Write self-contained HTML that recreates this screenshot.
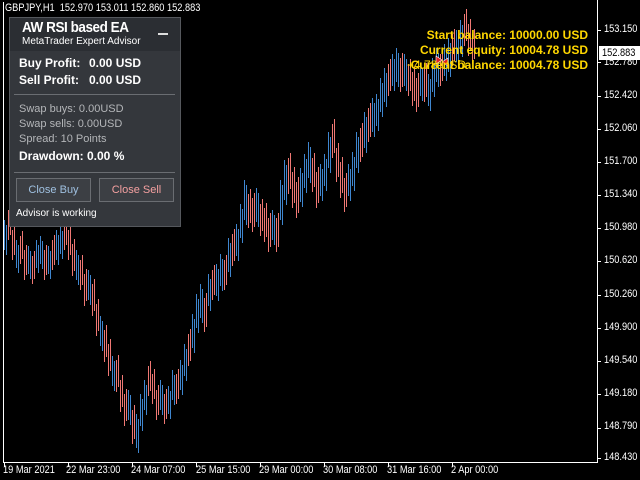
<!DOCTYPE html>
<html><head><meta charset="utf-8"><style>
body{margin:0;width:640px;height:480px;background:#000;overflow:hidden;position:relative;font-family:"Liberation Sans",sans-serif}
.ax{position:absolute;color:#fff;font-size:11px;line-height:11px;transform:scaleX(.84);transform-origin:left;white-space:nowrap}
.panel{position:absolute;left:9px;top:17px;width:170px;height:208px;background:#34373c;border:1px solid #55585d}
.hdr{height:33px;background:#2b2e33}
.t{position:absolute;color:#fff;white-space:nowrap}
.btn{position:absolute;top:160px;width:73px;height:22px;border:1px solid #6a6d72;background:#3c3f44;font-size:11px;line-height:22px;text-align:center}
.y{position:absolute;color:#ffd700;font-size:12px;font-weight:bold;white-space:nowrap;text-align:right;right:52px}
</style></head><body>
<svg width="640" height="480" style="position:absolute;left:0;top:0" shape-rendering="crispEdges">
<g fill="none" stroke-width="1" transform="translate(0.5,0)">
<path id="b" stroke="#3f86cf" d="M4 220v30M16 240v28M28 246v28M36 240v28M40 236v28M48 246v28M56 230v30M60 226v28M76 250v30M88 270v30M100 316v30M112 356v30M128 390v30M136 414v34M140 394v32M144 380v30M160 380v30M168 386v28M172 370v30M180 360v30M184 344v32M192 314v34M196 294v34M200 284v34M208 274v32M216 264v32M220 254v32M228 238v34M236 224v32M240 204v34M244 180v40M256 188v34M272 210v30M280 180v40M284 160v40M300 168v34M304 154v34M308 142v36M320 164v32M324 154v32M328 132v36M348 164v32M352 152v34M356 132v36M364 112v36M372 98v34M376 94v32M380 78v34M384 68v34M392 54v32M396 48v34M404 54v32M420 64v32M428 74v32M432 58v34M436 48v34M444 44v32M448 38v34M456 30v32M460 20v32"/>
<path id="r" stroke="#f07874" d="M8 210v30M12 230v30M20 236v28M24 250v30M32 256v28M44 250v30M52 240v30M64 220v30M68 230v30M72 244v32M80 260v30M84 274v32M92 284v32M96 304v32M104 330v32M108 344v32M116 360v32M120 380v32M124 394v32M132 410v34M148 366v30M152 374v30M156 390v30M164 394v30M176 374v30M188 334v32M204 298v34M212 270v30M224 260v30M232 234v32M248 194v34M252 198v34M260 204v32M264 208v34M268 218v34M276 218v34M288 158v36M292 172v36M296 182v36M312 158v34M316 172v36M332 124v34M336 148v34M340 162v36M344 178v34M360 128v34M368 108v34M388 64v32M400 58v34M408 64v32M412 72v34M416 78v34M424 68v34M440 54v32M452 34v32M464 14v32M468 24v32M472 34v30"/>
<use href="#b" transform="translate(2,5)"/>
<use href="#r" transform="translate(2,-5)"/>
</g>
<path d="M3.5 2V462.5H597.5V0" stroke="#fff" fill="none"/>
<g stroke="#fff" transform="translate(0.5,0)"><path d="M4 462v5M68 462v5M132 462v5M196 462v5M260 462v5M324 462v5M388 462v5M452 462v5"/></g>
<g stroke="#fff"><path d="M597 30.5h4M597 62.5h4M597 96.5h4M597 129.5h4M597 162.5h4M597 195.5h4M597 228.5h4M597 261.5h4M597 295.5h4M597 328.5h4M597 361.5h4M597 394.5h4M597 428.5h4M597 458.5h4"/></g>
<path d="M436 56l6 4-6 4zM448 58l-6 4 6 4z" fill="#e02020" stroke="#fff" stroke-width=".6" shape-rendering="auto"/>
</svg>
<div class="ax" style="left:5px;top:3px">GBPJPY,H1&nbsp; 152.970 153.011 152.860 152.883</div>
<div class="ax" style="left:604px;top:24px">153.150</div>
<div style="position:absolute;left:599px;top:46px;width:41px;height:14px;background:#fff;color:#000;font-size:11px;line-height:14px;padding-left:3px"><span style="display:inline-block;transform:scaleX(.84);transform-origin:left">152.883</span></div>
<div class="ax" style="left:604px;top:57px">152.780</div>
<div class="ax" style="left:604px;top:90px">152.420</div>
<div class="ax" style="left:604px;top:123px">152.060</div>
<div class="ax" style="left:604px;top:156px">151.700</div>
<div class="ax" style="left:604px;top:189px">151.340</div>
<div class="ax" style="left:604px;top:222px">150.980</div>
<div class="ax" style="left:604px;top:255px">150.620</div>
<div class="ax" style="left:604px;top:289px">150.260</div>
<div class="ax" style="left:604px;top:322px">149.900</div>
<div class="ax" style="left:604px;top:355px">149.540</div>
<div class="ax" style="left:604px;top:388px">149.180</div>
<div class="ax" style="left:604px;top:421px">148.790</div>
<div class="ax" style="left:604px;top:452px">148.430</div>
<div class="ax" style="left:3px;top:465px">19 Mar 2021</div>
<div class="ax" style="left:66px;top:465px">22 Mar 23:00</div>
<div class="ax" style="left:131px;top:465px">24 Mar 07:00</div>
<div class="ax" style="left:196px;top:465px">25 Mar 15:00</div>
<div class="ax" style="left:259px;top:465px">29 Mar 00:00</div>
<div class="ax" style="left:323px;top:465px">30 Mar 08:00</div>
<div class="ax" style="left:387px;top:465px">31 Mar 16:00</div>
<div class="ax" style="left:451px;top:465px">2 Apr 00:00</div>
<div class="y" style="top:28px">Start balance: 10000.00 USD</div>
<div class="y" style="top:43px">Current equity: 10004.78 USD</div>
<div class="y" style="top:58px">Current balance: 10004.78 USD</div>
<div class="y" style="top:58px;right:174px;font-weight:normal">+4.78 USD</div>
<div class="panel">
<div class="hdr"></div>
<div class="t" style="left:12px;top:1px;font-size:15px;font-weight:bold;letter-spacing:-.5px;transform:scaleX(.9);transform-origin:left">AW RSI based EA</div>
<div class="t" style="left:12px;top:18px;font-size:10px">MetaTrader Expert Advisor</div>
<div style="position:absolute;left:148px;top:15px;width:10px;height:2px;background:#ddd"></div>
<div class="t" style="left:9px;top:38px;font-size:12px;font-weight:bold">Buy Profit:</div>
<div class="t" style="left:79px;top:38px;font-size:12px;font-weight:bold">0.00 USD</div>
<div class="t" style="left:9px;top:55px;font-size:12px;font-weight:bold">Sell Profit:</div>
<div class="t" style="left:79px;top:55px;font-size:12px;font-weight:bold">0.00 USD</div>
<div style="position:absolute;left:4px;top:76px;width:161px;height:1px;background:#6a6d72"></div>
<div class="t" style="left:9px;top:85px;font-size:11px;color:#b4b6b9">Swap buys: 0.00USD</div>
<div class="t" style="left:9px;top:100px;font-size:11px;color:#b4b6b9">Swap sells: 0.00USD</div>
<div class="t" style="left:9px;top:115px;font-size:11px;color:#b4b6b9">Spread: 10 Points</div>
<div class="t" style="left:9px;top:131px;font-size:12px;font-weight:bold">Drawdown: 0.00 %</div>
<div style="position:absolute;left:4px;top:154px;width:161px;height:1px;background:#6a6d72"></div>
<div class="btn" style="left:6px;color:#9fc0e0;top:160px">Close Buy</div>
<div class="btn" style="left:89px;color:#f4a0a0;top:160px">Close Sell</div>
<div class="t" style="left:6px;top:190px;font-size:10px">Advisor is working</div>
</div>
</body></html>
